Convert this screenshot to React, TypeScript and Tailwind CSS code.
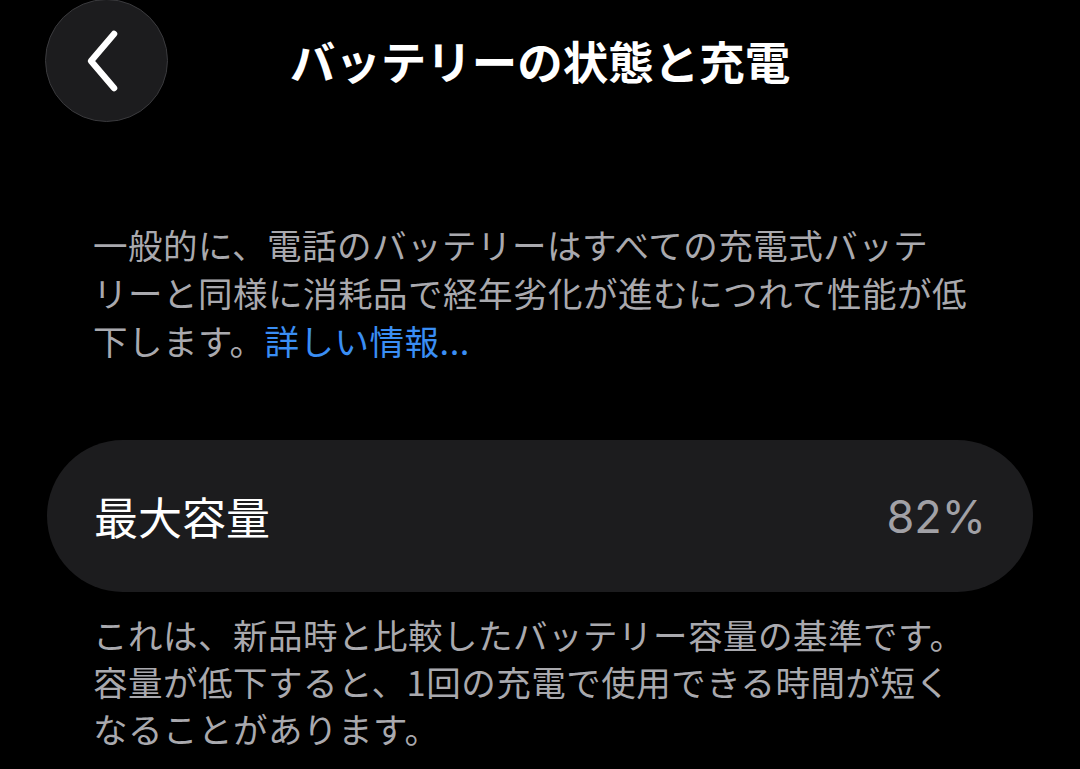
import type { ReactNode } from 'react';

const jp = '[font-family:"Noto_Sans_CJK_JP","Noto_Sans",sans-serif]';

function BackButton() {
  return (
    <button
      type="button"
      aria-label="戻る"
      className="flex h-[123px] w-[123px] items-center justify-center rounded-full border-[1.5px] border-[#3a3a3d] bg-[#1c1c1e]"
    >
      <svg width="40" height="64" viewBox="0 0 40 64" className="-ml-[8px]" aria-hidden="true">
        <polyline
          points="31,5 8,32 31,59"
          fill="none"
          stroke="#ffffff"
          strokeWidth="6.5"
          strokeLinecap="round"
          strokeLinejoin="round"
        />
      </svg>
    </button>
  );
}

function Note({ children, className = '' }: { readonly children: ReactNode; readonly className?: string }) {
  return (
    <p className={`pl-[93px] pr-[30px] text-[34.5px] tracking-[0.5px] text-[#a9a9ae] ${className}`}>{children}</p>
  );
}

export default function App() {
  return (
    <div className={`min-h-[769px] w-full overflow-hidden bg-black ${jp}`}>
      <header className="-mt-[1px] grid h-[123px] grid-cols-[1fr_auto_1fr] items-center px-[45px]">
        <div className="justify-self-start">
          <BackButton />
        </div>
        <h1 className="text-[45.5px] font-bold leading-none text-white">バッテリーの状態と充電</h1>
        <div />
      </header>

      <Note className="mt-[98px] leading-[48px]">
        一般的に、電話のバッテリーはすべての充電式バッテ
        <br />
        リーと同様に消耗品で経年劣化が進むにつれて性能が低
        <br />
        下します。<span className="text-[#3a8ef4]">詳しい情報...</span>
      </Note>

      <div className="mx-[47px] mt-[76px] flex h-[152px] items-center justify-between rounded-full bg-[#1c1c1e] px-[47px]">
        <span className="text-[44px] leading-none text-white">最大容量</span>
        <span className="[font-family:Inter,sans-serif] text-[45px] leading-none text-[#a1a1a6]">82%</span>
      </div>

      <Note className="mt-[19px] leading-[47px]">
        これは、新品時と比較したバッテリー容量の基準です。
        <br />
        容量が低下すると、1回の充電で使用できる時間が短く
        <br />
        なることがあります。
      </Note>
    </div>
  );
}
